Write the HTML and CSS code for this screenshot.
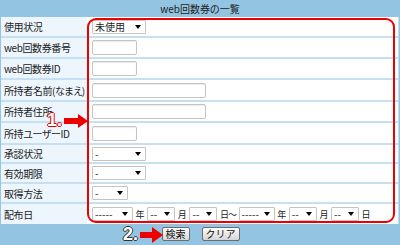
FILE: index.html
```html
<!DOCTYPE html>
<html lang="ja">
<head>
    <meta charset="UTF-8">
    <title>web回数券の一覧</title>
    <link rel="stylesheet" href="styles.css">
</head>
<body>
<div class="page">
    <h1 class="title">web回数券の一覧</h1>

    <div class="search-table">
        <div class="row h21">
            <div class="label">使用状況</div>
            <div class="value">
                <span class="select w54"><select><option>未使用</option></select></span>
            </div>
        </div>
        <div class="row h21">
            <div class="label">web回数券番号</div>
            <div class="value"><input type="text" class="text w45"></div>
        </div>
        <div class="row h21">
            <div class="label">web回数券ID</div>
            <div class="value"><input type="text" class="text w45"></div>
        </div>
        <div class="row h22">
            <div class="label">所持者名前(なまえ)</div>
            <div class="value"><input type="text" class="text w114"></div>
        </div>
        <div class="row h21">
            <div class="label">所持者住所</div>
            <div class="value"><input type="text" class="text w114"></div>
        </div>
        <div class="row h22">
            <div class="label">所持ユーザーID</div>
            <div class="value"><input type="text" class="text w45"></div>
        </div>
        <div class="row h19">
            <div class="label">承認状況</div>
            <div class="value">
                <span class="select w54"><select><option>-</option></select></span>
            </div>
        </div>
        <div class="row h20">
            <div class="label">有効期限</div>
            <div class="value">
                <span class="select w54"><select><option>-</option></select></span>
            </div>
        </div>
        <div class="row h20">
            <div class="label">取得方法</div>
            <div class="value">
                <span class="select w36"><select><option>-</option></select></span>
            </div>
        </div>
        <div class="row h20 last">
            <div class="label">配布日</div>
            <div class="value date">
                <span class="select w41"><select><option>-----</option></select></span>
                <span class="unit">年</span>
                <span class="select w28"><select><option>--</option></select></span>
                <span class="unit">月</span>
                <span class="select w28"><select><option>--</option></select></span>
                <span class="unit tilde">日～</span>
                <span class="select w36"><select><option>-----</option></select></span>
                <span class="unit">年</span>
                <span class="select w28"><select><option>--</option></select></span>
                <span class="unit">月</span>
                <span class="select w28"><select><option>--</option></select></span>
                <span class="unit">日</span>
            </div>
        </div>
    </div>

    <div class="actions">
        <button class="btn">検索</button>
        <button class="btn">クリア</button>
    </div>

    <!-- 説明用の注記 -->
    <div class="highlight"></div>
    <div class="callout callout-1">
        <span class="num num-red">1.</span>
        <svg width="24" height="14" viewBox="0 0 24 14"><polygon points="0,4 14,4 14,0 24,7 14,14 14,10 0,10" fill="#ee0000"/></svg>
    </div>
    <div class="callout callout-2">
        <span class="num num-dark">2.</span>
        <svg width="23" height="16" viewBox="0 0 23 16"><polygon points="0,5 12,5 12,0 23,8 12,16 12,11 0,11" fill="#ee0000"/></svg>
    </div>
</div>
</body>
</html>
```

FILE: styles.css
```css
* {
    margin: 0;
    padding: 0;
    box-sizing: border-box;
}

:root {
    --page-bg: #93c5e2;
    --label-bg: #edf6fd;
    --line: #c4e0f2;
    --text-color: #222222;
    --field-border: #c4c4c4;
}

body {
    width: 400px;
    height: 245px;
    overflow: hidden;
    background-color: var(--page-bg);
    color: var(--text-color);
    font-family: "Noto Sans CJK JP", "Liberation Sans", sans-serif;
    font-feature-settings: "palt";
}

.page {
    position: relative;
    height: 245px;
}

.title {
    height: 17px;
    line-height: 17px;
    text-align: center;
    font-size: 10px;
    font-weight: normal;
}

.search-table {
    margin: 0 1px;
    background-color: #ffffff;
    border-right: 1px solid var(--line);
}

.row {
    display: grid;
    grid-template-columns: 86px 1fr;
    border-bottom: 2px solid var(--line);
}

.row.last {
    border-bottom: none;
}

.h19 { height: 19px; }
.h20 { height: 20px; }
.h21 { height: 21px; }
.h22 { height: 22px; }

.label {
    display: flex;
    align-items: center;
    padding-left: 3px;
    font-size: 10px;
    letter-spacing: -0.4px;
    white-space: nowrap;
    background-color: var(--label-bg);
}

.value {
    display: flex;
    align-items: center;
    padding-left: 5px;
    white-space: nowrap;
}

.value.date {
    gap: 2.6px;
}

.unit {
    flex-shrink: 0;
    font-size: 9px;
}

.unit.tilde {
    letter-spacing: -1px;
}

input.text {
    display: block;
    height: 15px;
    border: 1px solid var(--field-border);
    border-radius: 2px;
    background-color: #ffffff;
    box-shadow: inset 0 1px 1px #ececec;
    outline: none;
}

.select {
    position: relative;
    display: block;
    flex-shrink: 0;
    height: 14px;
}

.select select {
    display: block;
    appearance: none;
    width: 100%;
    height: 14px;
    padding: 0 0 0 2px;
    border: 1px solid var(--field-border);
    border-radius: 1px;
    background-color: #ffffff;
    color: var(--text-color);
    font-family: "Noto Sans CJK JP", "Liberation Sans", sans-serif;
    font-size: 10px;
    line-height: 12px;
    outline: none;
}

.select::after {
    content: "";
    position: absolute;
    right: 5px;
    top: 5px;
    border-left: 3px solid transparent;
    border-right: 3px solid transparent;
    border-top: 4px solid #000000;
}

.w28 { width: 28px; }
.w36 { width: 36px; }
.w41 { width: 41px; }
.w45 { width: 45px; }
.w54 { width: 54px; }
.w114 { width: 114px; }

.actions {
    display: flex;
    justify-content: center;
    gap: 12px;
    padding-top: 3px;
    padding-left: 1px;
}

.btn {
    height: 14px;
    padding: 0 3px;
    font-family: "Noto Sans CJK JP", "Liberation Sans", sans-serif;
    font-size: 10px;
    line-height: 12px;
    color: #111111;
    border: 1px solid #6c6c6c;
    border-radius: 2px;
    background: linear-gradient(#fbfbfb, #d6d6d6);
}

.highlight {
    position: absolute;
    left: 87px;
    top: 18px;
    width: 308px;
    height: 205px;
    border: 2px solid #ee0000;
    border-radius: 9px;
}

.callout {
    position: absolute;
    display: flex;
    align-items: center;
    gap: 2px;
}

.callout-1 {
    left: 47px;
    top: 112px;
}

.callout-2 {
    left: 123px;
    top: 226px;
}

.callout svg {
    display: block;
}

.num {
    font-family: "Liberation Sans", sans-serif;
    font-size: 18px;
    font-weight: bold;
    line-height: 17px;
    color: #ffffff;
}

.num-red {
    text-shadow: 1px 0 0 #e00000, -1px 0 0 #e00000, 0 1px 0 #e00000, 0 -1px 0 #e00000;
}

.num-dark {
    text-shadow: 1px 0 0 #333333, -1px 0 0 #333333, 0 1px 0 #333333, 0 -1px 0 #333333;
}
```
